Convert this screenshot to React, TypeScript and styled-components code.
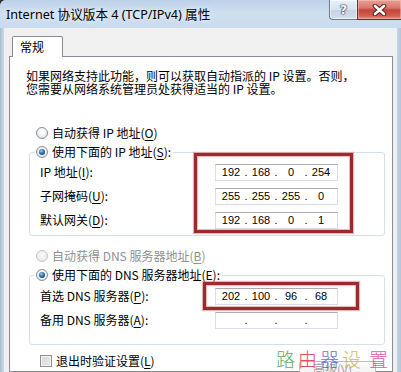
import React from "react";
import styled, { createGlobalStyle } from "styled-components";

const GlobalStyle = createGlobalStyle`
  html, body { margin: 0; padding: 0; background: #2f343b; }
  body { width: 401px; height: 372px; overflow: hidden; }
  #root { width: 401px; height: 372px; }
  * { box-sizing: border-box; }
`;

const UI_FONT = `"Noto Sans CJK SC", "Noto Sans", sans-serif`;

const Window = styled.div`
  position: relative;
  width: 401px;
  height: 372px;
  overflow: hidden;
  display: flex;
  flex-direction: column;
  background: linear-gradient(90deg, #a9bacd 0px, #c4d5e8 3px, #c4d5e8 397px, #b3c5d9 401px);
  border-top-left-radius: 6px;
  font-family: ${UI_FONT};
  font-size: 12px;
  color: #000;
`;

const TitleBar = styled.div`
  flex: 0 0 28px;
  display: flex;
  align-items: flex-start;
  background: linear-gradient(180deg, #bcd1e8 0%, #cfdfef 45%, #c9dbee 100%);
`;

const Title = styled.div`
  flex: 1;
  padding: 7px 0 0 6px;
  line-height: 16px;
  font-size: 12.6px;
  font-family: "Noto Sans", "Noto Sans CJK SC", sans-serif;
  text-shadow: 0 0 6px rgba(255, 255, 255, 0.95);
  white-space: nowrap;
`;

const CaptionButtons = styled.div`
  display: flex;
`;

const HelpButton = styled.div`
  width: 28px;
  height: 20px;
  display: flex;
  align-items: center;
  justify-content: center;
  border: 1px solid #6c7a8d;
  border-top: none;
  border-right: none;
  border-bottom-left-radius: 4px;
  background: linear-gradient(180deg, #e9f0f7 0%, #d7e2ee 50%, #c4d2e2 51%, #d3dfec 100%);
  box-shadow: inset 0 0 0 1px rgba(255, 255, 255, 0.6);
  font-family: "DejaVu Sans", sans-serif;
  font-weight: bold;
  font-size: 13px;
  color: #f4f7fb;
  text-shadow: 0 0 1px #2c3a4e, 0 0 1px #2c3a4e, 0 0 2px #2c3a4e;
`;

const CloseButton = styled.div`
  width: 44px;
  height: 20px;
  display: flex;
  align-items: center;
  justify-content: center;
  border: 1px solid #6b2c28;
  border-top: none;
  border-right: none;
  background: linear-gradient(180deg, #e7a196 0%, #d8776b 42%, #c4443a 52%, #cf5a4c 80%, #df8a7c 100%);
  box-shadow: inset 0 0 0 1px rgba(255, 210, 200, 0.45);
`;

const Client = styled.div`
  flex: 1;
  min-height: 0;
  margin: 0 4px;
  padding: 8px 4px 0 5px;
  background: #f0f0f0;
  display: flex;
  flex-direction: column;
`;

const TabStrip = styled.div`
  display: flex;
  padding-left: 3px;
`;

const Tab = styled.div`
  position: relative;
  z-index: 1;
  height: 21px;
  margin-bottom: -1px;
  padding: 0 7px;
  line-height: 20px;
  background: #fff;
  border: 1px solid #898c95;
  border-bottom: none;
  border-radius: 2px 2px 0 0;
  width: 51px;
`;

const Panel = styled.div`
  flex: 1;
  min-height: 0;
  background: #fff;
  border: 1px solid #898c95;
  padding: 12px 7px 0 16px;
  display: flex;
  flex-direction: column;
`;

const Description = styled.p`
  margin: 0;
  line-height: 13px;
  white-space: nowrap;
`;

const RadioRow = styled.div<{ $top?: number; $disabled?: boolean }>`
  display: flex;
  align-items: center;
  gap: 4px;
  height: 16px;
  line-height: 16px;
  padding-left: 10px;
  margin-top: ${(p) => p.$top ?? 0}px;
  color: ${(p) => (p.$disabled ? "#8f8f8f" : "#000")};
  white-space: nowrap;
`;

const RadioDot = styled.span<{ $checked?: boolean; $disabled?: boolean }>`
  flex: 0 0 12px;
  width: 12px;
  height: 12px;
  border-radius: 50%;
  display: inline-flex;
  align-items: center;
  justify-content: center;
  border: 1px solid ${(p) => (p.$disabled ? "#c4c4c4" : "#8a8f95")};
  background: ${(p) =>
    p.$disabled
      ? "radial-gradient(circle at 50% 40%, #fafafa, #e6e6e6)"
      : "radial-gradient(circle at 50% 40%, #ffffff 20%, #d9dcdf 90%)"};
  &::after {
    content: "";
    display: ${(p) => (p.$checked ? "block" : "none")};
    width: 6px;
    height: 6px;
    border-radius: 50%;
    background: radial-gradient(circle at 40% 35%, #9fd0f4 0%, #2f6ea6 45%, #0d2f50 100%);
  }
`;

const GroupBox = styled.fieldset<{ $bottom: number }>`
  margin: 3px 0 0 3px;
  padding: 0 0 ${(p) => p.$bottom}px 0;
  border: 1px solid #d5dfe5;
  border-radius: 3px;
  min-width: 0;
`;

const GroupLegend = styled.legend`
  margin-left: 4px;
  padding: 0 2px;
  display: flex;
  align-items: center;
  gap: 4px;
  height: 16px;
  line-height: 16px;
  white-space: nowrap;
`;

const FieldGrid = styled.div<{ $padTop?: number }>`
  position: relative;
  display: grid;
  grid-template-columns: 175px 123px;
  grid-auto-rows: 24px;
  align-items: center;
  padding: ${(p) => p.$padTop ?? 0}px 0 0 10px;
`;

const FieldLabel = styled.span`
  white-space: nowrap;
  line-height: 16px;
`;

const Key = styled.span`
  text-decoration: underline;
  text-underline-offset: 2px;
`;

const IpBox = styled.div`
  display: flex;
  width: 123px;
  height: 17px;
  border: 1px solid #dadde3;
  border-top-color: #abadb3;
  background: #fff;
  padding-left: 2px;
  font-family: "Liberation Sans", Arial, sans-serif;
  font-size: 11px;
  line-height: 15px;
  color: #000;
`;

const Octet = styled.span`
  width: 26px;
  text-align: center;
`;

const IpDot = styled.span`
  width: 4px;
  text-align: center;
`;

const Annotation = styled.div<{ $l: number; $t: number; $w: number; $h: number }>`
  position: absolute;
  left: ${(p) => p.$l}px;
  top: ${(p) => p.$t}px;
  width: ${(p) => p.$w}px;
  height: ${(p) => p.$h}px;
  border: 3px solid #9b2a2e;
  box-shadow: 0 0 1px 1px rgba(214, 120, 122, 0.55), inset 0 0 1px 1px rgba(214, 120, 122, 0.55);
  pointer-events: none;
`;

const BottomRow = styled.div`
  display: flex;
  align-items: flex-start;
  margin-top: 8px;
  padding-left: 14px;
`;

const CheckLabel = styled.div`
  display: flex;
  align-items: center;
  gap: 4px;
  height: 16px;
  line-height: 16px;
  white-space: nowrap;
`;

const CheckBox = styled.span`
  flex: 0 0 12px;
  width: 12px;
  height: 12px;
  border: 1px solid #8e8f8f;
  background: linear-gradient(135deg, #d2d2d2 0%, #f2f2f2 100%);
  box-shadow: inset 0 0 0 1px #f6f6f6, inset 0 0 0 2px #dedede;
`;

const AdvancedButton = styled.div`
  margin-left: auto;
  margin-right: 9px;
  margin-top: 8px;
  width: 77px;
  height: 23px;
  border: 1px solid #bdbdbd;
  border-radius: 3px;
  background: linear-gradient(180deg, #fdfdfd 0%, #f3f3f3 50%, #e9e9e9 51%, #e2e2e2 100%);
  color: #a2a2a2;
  text-align: center;
  line-height: 14px;
  white-space: nowrap;
`;

const Watermark = styled.div`
  position: absolute;
  left: 276px;
  top: 347px;
  display: flex;
  align-items: center;
  gap: 3px;
  font-family: ${UI_FONT};
  font-size: 19px;
  font-weight: 300;
  line-height: 24px;
  pointer-events: none;
`;

const WmChar = styled.span<{ $color: string; $extra?: number }>`
  color: ${(p) => p.$color};
  margin-left: ${(p) => p.$extra ?? 0}px;
  opacity: 0.9;
`;

const IpField: React.FC<{ octets: string[] }> = ({ octets }) => (
  <IpBox>
    {octets.map((o, i) => (
      <React.Fragment key={i}>
        {i > 0 && <IpDot>.</IpDot>}
        <Octet>{o}</Octet>
      </React.Fragment>
    ))}
  </IpBox>
);

const CloseGlyph = () => (
  <svg width="15" height="12" viewBox="0 0 15 12">
    <path d="M3 2 L12 10 M12 2 L3 10" stroke="#5b1f1c" strokeWidth="4.6" strokeLinecap="round" fill="none" />
    <path d="M3 2 L12 10 M12 2 L3 10" stroke="#ffffff" strokeWidth="2.6" strokeLinecap="round" fill="none" />
  </svg>
);

export default function App() {
  return (
    <>
      <GlobalStyle />
      <Window>
        <TitleBar>
          <Title>Internet 协议版本 4 (TCP/IPv4) 属性</Title>
          <CaptionButtons>
            <HelpButton>?</HelpButton>
            <CloseButton>
              <CloseGlyph />
            </CloseButton>
          </CaptionButtons>
        </TitleBar>
        <Client>
          <TabStrip>
            <Tab>常规</Tab>
          </TabStrip>
          <Panel>
            <Description>
              如果网络支持此功能，则可以获取自动指派的 IP 设置。否则，
              <br />
              您需要从网络系统管理员处获得适当的 IP 设置。
            </Description>

            <RadioRow $top={30}>
              <RadioDot />
              <span>
                自动获得 IP 地址(<Key>O</Key>)
              </span>
            </RadioRow>

            <GroupBox $bottom={3}>
              <GroupLegend>
                <RadioDot $checked />
                <span>
                  使用下面的 IP 地址(<Key>S</Key>):
                </span>
              </GroupLegend>
              <FieldGrid>
                <FieldLabel>
                  IP 地址(<Key>I</Key>):
                </FieldLabel>
                <IpField octets={["192", "168", "0", "254"]} />
                <FieldLabel>
                  子网掩码(<Key>U</Key>):
                </FieldLabel>
                <IpField octets={["255", "255", "255", "0"]} />
                <FieldLabel>
                  默认网关(<Key>D</Key>):
                </FieldLabel>
                <IpField octets={["192", "168", "0", "1"]} />
                <Annotation $l={164} $t={-7} $w={159} $h={80} />
              </FieldGrid>
            </GroupBox>

            <RadioRow $top={12} $disabled>
              <RadioDot $disabled />
              <span>
                自动获得 DNS 服务器地址(<Key>B</Key>)
              </span>
            </RadioRow>

            <GroupBox $bottom={12}>
              <GroupLegend>
                <RadioDot $checked />
                <span>
                  使用下面的 DNS 服务器地址(<Key>E</Key>):
                </span>
              </GroupLegend>
              <FieldGrid $padTop={1}>
                <FieldLabel>
                  首选 DNS 服务器(<Key>P</Key>):
                </FieldLabel>
                <IpField octets={["202", "100", "96", "68"]} />
                <FieldLabel>
                  备用 DNS 服务器(<Key>A</Key>):
                </FieldLabel>
                <IpField octets={["", "", "", ""]} />
                <Annotation $l={173} $t={-1} $w={156} $h={28} />
              </FieldGrid>
            </GroupBox>

            <BottomRow>
              <CheckLabel>
                <CheckBox />
                <span>
                  退出时验证设置(<Key>L</Key>)
                </span>
              </CheckLabel>
              <AdvancedButton>高级(V)...</AdvancedButton>
            </BottomRow>
          </Panel>
        </Client>
        <Watermark>
          <WmChar $color="#4fa555">路</WmChar>
          <WmChar $color="#dd3b4f">由</WmChar>
          <WmChar $color="#5a5fcc">器</WmChar>
          <WmChar $color="#ccb155">设</WmChar>
          <WmChar $color="#d94b9e" $extra={5}>置</WmChar>
        </Watermark>
      </Window>
    </>
  );
}
